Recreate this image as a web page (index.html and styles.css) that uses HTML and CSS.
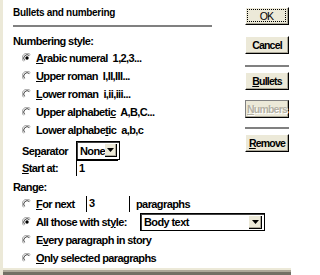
FILE: index.html
```html
<!DOCTYPE html>
<html>
<head>
<meta charset="utf-8">
<link rel="stylesheet" href="styles.css">
</head>
<body>
<div class="dialog">
  <div class="content">
    <div class="left">
      <div class="title">Bullets and numbering</div>
      <div class="rule"></div>
      <div class="heading">Numbering style:</div>
      <div class="group">
        <div class="radio checked"><span class="rb"><svg viewBox="0 0 10 10" width="10" height="10"><path d="M1.6 8.4 A4.6 4.6 0 0 1 8.4 1.6" fill="none" stroke="#a0a0a0" stroke-width="1"/><path d="M2.6 7.4 A3.4 3.4 0 0 1 7.4 2.6" fill="none" stroke="#404040" stroke-width="1"/><circle cx="5" cy="5" r="1.7" fill="#000"/></svg></span><span><u>A</u>rabic numeral&nbsp; 1,2,3...</span></div>
        <div class="radio"><span class="rb"><svg viewBox="0 0 10 10" width="10" height="10"><path d="M1.6 8.4 A4.6 4.6 0 0 1 8.4 1.6" fill="none" stroke="#a0a0a0" stroke-width="1"/><path d="M2.6 7.4 A3.4 3.4 0 0 1 7.4 2.6" fill="none" stroke="#404040" stroke-width="1"/></svg></span><span><u>U</u>pper roman&nbsp; I,II,III...</span></div>
        <div class="radio"><span class="rb"><svg viewBox="0 0 10 10" width="10" height="10"><path d="M1.6 8.4 A4.6 4.6 0 0 1 8.4 1.6" fill="none" stroke="#a0a0a0" stroke-width="1"/><path d="M2.6 7.4 A3.4 3.4 0 0 1 7.4 2.6" fill="none" stroke="#404040" stroke-width="1"/></svg></span><span><u>L</u>ower roman&nbsp; i,ii,iii...</span></div>
        <div class="radio"><span class="rb"><svg viewBox="0 0 10 10" width="10" height="10"><path d="M1.6 8.4 A4.6 4.6 0 0 1 8.4 1.6" fill="none" stroke="#a0a0a0" stroke-width="1"/><path d="M2.6 7.4 A3.4 3.4 0 0 1 7.4 2.6" fill="none" stroke="#404040" stroke-width="1"/></svg></span><span>Upper alphabeti<u>c</u>&nbsp; A,B,C...</span></div>
        <div class="radio"><span class="rb"><svg viewBox="0 0 10 10" width="10" height="10"><path d="M1.6 8.4 A4.6 4.6 0 0 1 8.4 1.6" fill="none" stroke="#a0a0a0" stroke-width="1"/><path d="M2.6 7.4 A3.4 3.4 0 0 1 7.4 2.6" fill="none" stroke="#404040" stroke-width="1"/></svg></span><span>Lower alphabe<u>t</u>ic&nbsp; a,b,c</span></div>
      </div>
      <div class="field sep">
        <span class="flabel">Se<u>p</u>arator</span>
        <div class="select small"><span class="val">None</span><span class="arrow"><svg viewBox="0 0 7 4" width="7" height="4"><path d="M0 0 H7 L3.5 4 Z" fill="#000"/></svg></span></div>
      </div>
      <div class="field start">
        <span class="flabel"><u>S</u>tart at:</span>
        <div class="input start-input">1</div>
      </div>
      <div class="heading range">Range:</div>
      <div class="group">
        <div class="radio"><span class="rb"><svg viewBox="0 0 10 10" width="10" height="10"><path d="M1.6 8.4 A4.6 4.6 0 0 1 8.4 1.6" fill="none" stroke="#a0a0a0" stroke-width="1"/><path d="M2.6 7.4 A3.4 3.4 0 0 1 7.4 2.6" fill="none" stroke="#404040" stroke-width="1"/></svg></span><span class="rl-fixed"><u>F</u>or next</span><div class="input next-input">3</div><span class="after">paragraphs</span></div>
        <div class="radio checked"><span class="rb"><svg viewBox="0 0 10 10" width="10" height="10"><path d="M1.6 8.4 A4.6 4.6 0 0 1 8.4 1.6" fill="none" stroke="#a0a0a0" stroke-width="1"/><path d="M2.6 7.4 A3.4 3.4 0 0 1 7.4 2.6" fill="none" stroke="#404040" stroke-width="1"/><circle cx="5" cy="5" r="1.7" fill="#000"/></svg></span><span class="rl-style">All those with st<u>y</u>le:</span><div class="select wide"><span class="val">Body text</span><span class="arrow"><svg viewBox="0 0 7 4" width="7" height="4"><path d="M0 0 H7 L3.5 4 Z" fill="#000"/></svg></span></div></div>
        <div class="radio"><span class="rb"><svg viewBox="0 0 10 10" width="10" height="10"><path d="M1.6 8.4 A4.6 4.6 0 0 1 8.4 1.6" fill="none" stroke="#a0a0a0" stroke-width="1"/><path d="M2.6 7.4 A3.4 3.4 0 0 1 7.4 2.6" fill="none" stroke="#404040" stroke-width="1"/></svg></span><span>E<u>v</u>ery paragraph in story</span></div>
        <div class="radio"><span class="rb"><svg viewBox="0 0 10 10" width="10" height="10"><path d="M1.6 8.4 A4.6 4.6 0 0 1 8.4 1.6" fill="none" stroke="#a0a0a0" stroke-width="1"/><path d="M2.6 7.4 A3.4 3.4 0 0 1 7.4 2.6" fill="none" stroke="#404040" stroke-width="1"/></svg></span><span><u>O</u>nly selected paragraphs</span></div>
      </div>
    </div>
    <div class="right">
      <div class="btn default"><span class="focus">OK</span></div>
      <div class="btn cancel">Cancel</div>
      <div class="brule"></div>
      <div class="btn bullets"><span><u>B</u>ullets</span></div>
      <div class="btn numbers disabled"><span><u>N</u>umbers</span></div>
      <div class="brule second"></div>
      <div class="btn remove"><span><u>R</u>emove</span></div>
    </div>
  </div>
  <div class="frame-bottom"></div>
</div>
</body>
</html>
```
FILE: styles.css
```css
* { box-sizing: border-box; }
html, body { margin: 0; padding: 0; }
body {
  width: 291px;
  height: 275px;
  overflow: hidden;
  background: #fff;
  font-family: "Liberation Sans", Arial, sans-serif;
  font-size: 11px;
  font-weight: bold;
  letter-spacing: -0.6px;
  color: #000;
}
u { text-decoration-thickness: 1px; text-underline-offset: 1px; }

.dialog {
  width: 291px;
  height: 275px;
  display: flex;
  flex-direction: column;
  border-left: 3px solid #ece9d8;
}
.content { flex: 1; display: flex; min-height: 0; }
.frame-bottom {
  height: 7px;
  background: linear-gradient(#ece9d8 0 2px, #aca899 2px 4px, #716f64 4px 7px);
}

.left { width: 234px; flex-shrink: 0; padding: 6px 0 0 10px; }
.title { font-size: 10px; line-height: 14px; letter-spacing: -0.3px; }
.rule { height: 2px; background: #808080; margin-top: 5px; width: 199px; }
.heading { line-height: 14px; margin-top: 7px; }
.heading.range { margin-top: 4px; }

.group { margin-top: 1px; }
.radio {
  height: 18px;
  display: flex;
  align-items: center;
  padding-left: 9px;
  white-space: nowrap;
}
.radio > *, .field > * { flex-shrink: 0; }
.rb { width: 10px; height: 10px; margin-right: 4px; display: flex; }
.rl-fixed { width: 50px; }
.rl-style { width: 104px; }
.after { margin-left: 6px; }

.field { display: flex; align-items: center; padding-left: 9px; }
.field .flabel { width: 54px; }
.field.sep { margin-top: 2px; height: 19px; }
.field.start { height: 16px; }

.select {
  display: flex;
  align-items: center;
  border: 1px solid #000;
  box-shadow: inset 1px 1px 0 #404040;
  background: #fff;
  height: 19px;
}
.select.small { width: 44px; }
.select.wide { width: 125px; height: 18px; }
.select .val { flex: 1; padding-left: 3px; }
.select .arrow {
  width: 13px;
  height: 13px;
  margin-right: 2px;
  background: #ece9d8;
  border-right: 1px solid #000;
  border-bottom: 1px solid #000;
  box-shadow: inset -1px -1px 0 #aca899;
  display: flex;
  align-items: center;
  justify-content: center;
}

.input { height: 16px; line-height: 15px; padding-left: 2px; background: #fff; }
.start-input { width: 42px; border-left: 1px solid #000; border-top: 1px solid #000; }
.next-input { width: 44px; border-left: 1px solid #000; border-right: 1px solid #000; }

.right {
  flex: 1;
  display: flex;
  flex-direction: column;
  padding: 7px 0 0 8px;
}
.btn {
  width: 44px;
  height: 18px;
  background: #ece9d8;
  border: 1px solid;
  border-color: #fff #000 #000 #fff;
  box-shadow: inset -1px -1px 0 #aca899;
  display: flex;
  align-items: center;
  justify-content: center;
  font-size: 10.5px;
  line-height: 14px;
  letter-spacing: -0.8px;
}
.btn.default { padding: 1px 2px 2px 1px; }
.btn .focus {
  flex: 1;
  align-self: stretch;
  border: 1px dotted #000;
  display: flex;
  align-items: center;
  justify-content: center;
  font-weight: normal;
}
.btn.cancel { margin-top: 11px; }
.brule { width: 44px; height: 2px; background: #808080; margin-top: 11px; }
.brule.second { margin-top: 9px; }
.btn.bullets { margin-top: 5px; }
.btn.numbers { margin-top: 10px; border-color: #808080 #000 #000 #808080; }
.btn.disabled { color: #b4b1a4; text-shadow: 1px 1px 0 #fff; }
.btn.remove { margin-top: 5px; }
```
